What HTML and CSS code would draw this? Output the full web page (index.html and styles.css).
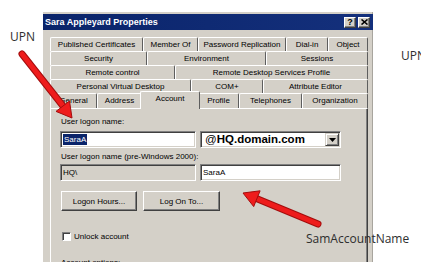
FILE: index.html
```html
<!DOCTYPE html>
<html lang="en">
<head>
  <meta charset="UTF-8">
  <title>Sara Appleyard Properties</title>
  <link rel="stylesheet" href="styles.css">
</head>
<body>

<div class="dialog">
  <div class="titlebar">
    <span class="title">Sara Appleyard Properties</span>
    <div class="caption-buttons">
      <span class="cap-btn">?</span>
      <span class="cap-btn">
        <svg width="7" height="6" viewBox="0 0 7 6"><path d="M0.5 0.5L6.5 5.5M6.5 0.5L0.5 5.5" stroke="#000" stroke-width="1.6"/></svg>
      </span>
    </div>
  </div>

  <div class="tabs">
    <div class="tab-row row-1">
      <span class="tab">Published Certificates</span>
      <span class="tab">Member Of</span>
      <span class="tab">Password Replication</span>
      <span class="tab">Dial-in</span>
      <span class="tab">Object</span>
    </div>
    <div class="tab-row row-2">
      <span class="tab">Security</span>
      <span class="tab">Environment</span>
      <span class="tab">Sessions</span>
    </div>
    <div class="tab-row row-3">
      <span class="tab">Remote control</span>
      <span class="tab">Remote Desktop Services Profile</span>
    </div>
    <div class="tab-row row-4">
      <span class="tab">Personal Virtual Desktop</span>
      <span class="tab">COM+</span>
      <span class="tab">Attribute Editor</span>
    </div>
    <div class="tab-row row-5">
      <span class="tab">General</span>
      <span class="tab">Address</span>
      <span class="tab active">Account</span>
      <span class="tab">Profile</span>
      <span class="tab">Telephones</span>
      <span class="tab">Organization</span>
    </div>
  </div>

  <div class="panel">
    <div class="label">User logon name:</div>
    <div class="field-row">
      <div class="field field-left"><span class="selected">SaraA</span></div>
      <div class="field combo">
        <span class="combo-text">@<b>HQ.domain.com</b></span>
        <span class="combo-btn">
          <svg width="7" height="4" viewBox="0 0 7 4"><path d="M0 0h7L3.5 4z" fill="#000"/></svg>
        </span>
      </div>
    </div>

    <div class="label label-pre">User logon name (pre-Windows 2000):</div>
    <div class="field-row field-row-pre">
      <div class="field field-left disabled">HQ\</div>
      <div class="field combo">SaraA</div>
    </div>

    <div class="button-row">
      <span class="btn btn-hours">Logon Hours...</span>
      <span class="btn btn-logon">Log On To...</span>
    </div>

    <div class="check-row">
      <span class="checkbox"></span>
      <span>Unlock account</span>
    </div>

    <div class="label section">Account options:</div>
  </div>
</div>

<span class="note note-upn">UPN</span>
<span class="note note-upn-right">UPN</span>
<span class="note note-sam">SamAccountName</span>

<svg class="arrows" width="421" height="262" viewBox="0 0 421 262">
  <!-- UPN arrow -->
  <line x1="22" y1="54" x2="63" y2="106" stroke="#a30d0d" stroke-width="7" stroke-linecap="round"/>
  <line x1="22" y1="54" x2="63" y2="106" stroke="#ee1c1c" stroke-width="5" stroke-linecap="round"/>
  <polygon points="72,118 56,111.4 69.5,101" fill="#ee1c1c" stroke="#a30d0d" stroke-width="1" stroke-linejoin="round"/>
  <!-- SamAccountName arrow -->
  <line x1="318" y1="224" x2="257" y2="198.7" stroke="#a30d0d" stroke-width="7" stroke-linecap="round"/>
  <line x1="318" y1="224" x2="257" y2="198.7" stroke="#ee1c1c" stroke-width="5" stroke-linecap="round"/>
  <polygon points="243,193 260.1,190.8 253.7,206.6" fill="#ee1c1c" stroke="#a30d0d" stroke-width="1" stroke-linejoin="round"/>
</svg>

</body>
</html>
```

FILE: styles.css
```css
body {
  margin: 0;
  width: 421px;
  height: 262px;
  overflow: hidden;
  position: relative;
  background: #fff;
  font-family: 'Liberation Sans', Arial, sans-serif;
  font-size: 8px;
  color: #000;
}
.dialog {
  margin: 12px 0 0 43px;
  width: 330px;
  height: 250px;
  padding-top: 2px;
  box-sizing: border-box;
  overflow: hidden;
  background: #d4d0c8;
  box-shadow: inset -1px 0 #a8a59e;
}
.titlebar {
  height: 16px;
  display: flex;
  align-items: center;
  justify-content: space-between;
  padding: 0 3px 0 2px;
  background: linear-gradient(90deg, #0a246a, #14307c);
  color: #fff;
}
.title {
  font-weight: 700;
  font-size: 9px;
}
.caption-buttons {
  display: flex;
  gap: 2px;
}
.cap-btn {
  width: 12px;
  height: 11px;
  box-sizing: border-box;
  display: flex;
  align-items: center;
  justify-content: center;
  background: #d4d0c8;
  border: 1px solid;
  border-color: #fff #404040 #404040 #fff;
  box-shadow: inset -1px -1px #808080;
  color: #000;
  font-weight: 700;
  font-size: 9px;
  line-height: 9px;
}
.tabs {
  padding: 7px 5px 0 7px;
}
.tab-row {
  display: grid;
  height: 14px;
}
.row-1 {
  grid-template-columns: 93px 55px 88px 42px 1fr;
}
.row-2 {
  grid-template-columns: 97px 119px 1fr;
}
.row-3 {
  grid-template-columns: 125px 1fr;
}
.row-4 {
  grid-template-columns: 141px 72px 1fr;
}
.row-5 {
  grid-template-columns: 47px 45px 56px 41px 63px 1fr;
  height: 15px;
}
.tab {
  box-sizing: border-box;
  border-top: 1px solid #fff;
  border-left: 1px solid #fff;
  border-right: 1px solid #5e5e5e;
  border-radius: 2px 2px 0 0;
  background: #d4d0c8;
  text-align: center;
  line-height: 13px;
  white-space: nowrap;
  overflow: hidden;
}
.tab.active {
  margin: -2px -2px -1px;
  position: relative;
  z-index: 1;
}
.panel {
  margin: 0 5px 0 7px;
  height: 160px;
  padding: 8px 0 0 9px;
  border-top: 1px solid #fff;
  border-left: 1px solid #fff;
  border-right: 1px solid #404040;
  box-shadow: inset -1px 0 #808080;
}
.label {
  height: 10px;
  line-height: 10px;
  padding-left: 1px;
  white-space: nowrap;
}
.label-pre {
  margin-top: 4px;
}
.field-row {
  display: flex;
  gap: 4px;
  margin-top: 4px;
}
.field-row-pre {
  margin-top: 2px;
}
.field {
  height: 17px;
  box-sizing: border-box;
  padding: 0 2px;
  border: 1px solid;
  border-color: #808080 #fff #fff #808080;
  box-shadow: inset 1px 1px #404040, inset -1px -1px #d4d0c8;
  background: #fff;
  line-height: 15px;
  white-space: nowrap;
}
.field-left {
  width: 136px;
}
.field.disabled {
  background: #d4d0c8;
}
.combo {
  width: 141px;
  display: flex;
  align-items: center;
  justify-content: space-between;
  padding-right: 1px;
}
.selected {
  display: inline-block;
  background: #0a246a;
  color: #fff;
  line-height: 11px;
  padding: 0 1px;
  vertical-align: middle;
}
.combo-text {
  font-size: 11.5px;
  padding-left: 2px;
}
.combo-text b {
  font-weight: 700;
}
.combo-btn {
  width: 14px;
  height: 13px;
  box-sizing: border-box;
  display: flex;
  align-items: center;
  justify-content: center;
  background: #d4d0c8;
  border: 1px solid;
  border-color: #d4d0c8 #404040 #404040 #d4d0c8;
  box-shadow: inset 1px 1px #fff, inset -1px -1px #808080;
}
.button-row {
  display: flex;
  gap: 6px;
  margin: 10px 0 0 1px;
}
.btn {
  height: 20px;
  box-sizing: border-box;
  display: flex;
  align-items: center;
  justify-content: center;
  border: 1px solid;
  border-color: #fff #404040 #404040 #fff;
  box-shadow: inset -1px -1px #808080;
}
.btn-hours {
  width: 76px;
}
.btn-logon {
  width: 77px;
}
.check-row {
  display: flex;
  align-items: center;
  gap: 3px;
  height: 11px;
  margin: 20px 0 0 2px;
}
.checkbox {
  width: 9px;
  height: 9px;
  box-sizing: border-box;
  border: 1px solid;
  border-color: #808080 #fff #fff #808080;
  box-shadow: inset 1px 1px #404040;
  background: #fff;
}
.section {
  margin-top: 16px;
}
.note {
  position: absolute;
  font-family: 'Open Sans', sans-serif;
  font-size: 12px;
  line-height: 12px;
  color: #2e2e2e;
  white-space: nowrap;
}
.note-upn {
  left: 10px;
  top: 31px;
}
.note-upn-right {
  left: 401px;
  top: 50px;
}
.note-sam {
  left: 306px;
  top: 233px;
}
.arrows {
  position: absolute;
  left: 0;
  top: 0;
  pointer-events: none;
}
```
